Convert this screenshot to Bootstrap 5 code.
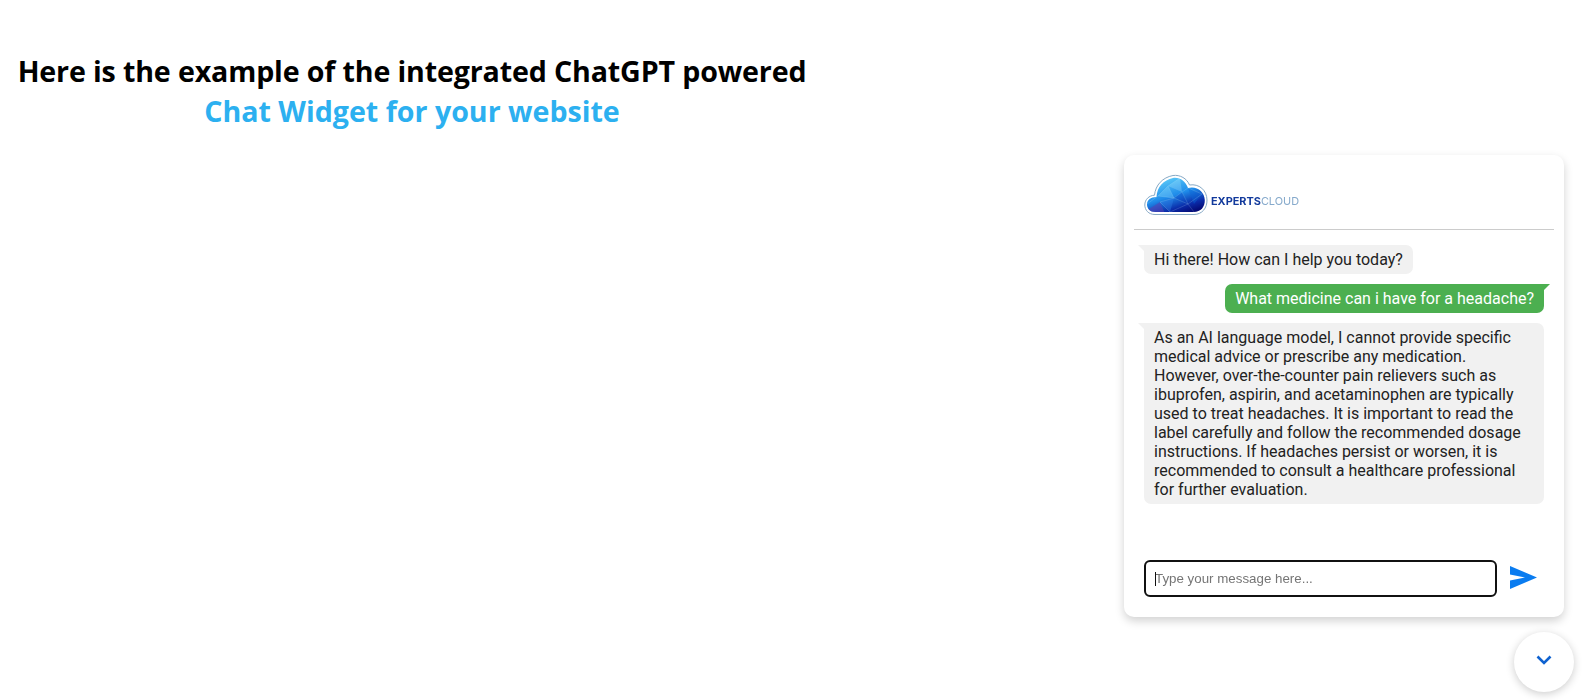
<!DOCTYPE html>
<html lang="en">
<head>
    <meta charset="UTF-8">
    <title>Chat Widget</title>
    <meta name="viewport" content="width=device-width, initial-scale=1">
    <link href="https://cdn.jsdelivr.net/npm/bootstrap@5.3.0/dist/css/bootstrap.min.css" rel="stylesheet">
    <style>
        body {
            background: #fff;
            overflow: hidden;
        }
        #intro {
            width: 824px;
            padding-top: 51px;
            font-family: "Open Sans", sans-serif;
            font-weight: 700;
            font-size: 28.6px;
            letter-spacing: -0.14px;
            line-height: 40px;
            text-align: center;
            color: #000;
        }
        #intro span {
            display: block;
            letter-spacing: 0;
            color: #2cb0f0;
        }
        #chatWidget {
            position: fixed;
            top: 155px;
            left: 1124px;
            width: 440px;
            height: 462px;
            padding: 0 10px;
            border-radius: 10px;
            background: #fff;
            box-shadow: 0 4px 10px rgba(0,0,0,0.18);
            font-family: Roboto, sans-serif;
            font-size: 16px;
            line-height: 19px;
            color: #222;
        }
        #chatHead {
            height: 75px;
            padding: 19px 0 0 10px;
            border-bottom: 1px solid #ccc;
        }
        #brand {
            margin: 20px 0 0 3px;
            font-family: Inter, sans-serif;
            font-size: 10.9px;
            line-height: 14px;
            color: #85a9cb;
        }
        #brand b {
            color: #123a9c;
            font-weight: 700;
        }
        #chatLog {
            padding: 15px 10px 0;
            height: 325px;
        }
        .msg-bubble {
            position: relative;
            padding: 5px 10px;
            border-radius: 7px;
            margin-bottom: 10px;
        }
        .msg-bot {
            align-self: flex-start;
            background: #f1f1f1;
            border-top-left-radius: 0;
        }
        .msg-bot::before {
            content: "";
            position: absolute;
            top: 0;
            left: -6px;
            border-top: 6px solid #f1f1f1;
            border-left: 6px solid transparent;
        }
        .msg-user {
            align-self: flex-end;
            background: #4caf50;
            color: #fff;
            border-top-right-radius: 0;
        }
        .msg-user::after {
            content: "";
            position: absolute;
            top: 0;
            right: -6px;
            border-top: 6px solid #4caf50;
            border-right: 6px solid transparent;
        }
        #chatInput {
            padding-left: 10px;
            padding-top: 5px;
        }
        #inputWrap {
            position: relative;
            line-height: 0;
        }
        #inputCaret {
            position: absolute;
            top: 12px;
            left: 11px;
            width: 1px;
            height: 14px;
            background: #111;
        }
        #messageBox {
            width: 353px;
            height: 37px;
            padding: 0 9px;
            border: 2px solid #111;
            border-radius: 6px;
            font-family: "Liberation Sans", sans-serif;
            font-size: 13.33px;
            outline: none;
        }
        #messageBox::placeholder {
            color: #757575;
        }
        #sendBtn {
            margin-left: 13px;
            margin-top: -3px;
            line-height: 0;
        }
        #toggleBtn {
            position: fixed;
            top: 632px;
            left: 1514px;
            width: 60px;
            height: 60px;
            padding-bottom: 4px;
            border-radius: 50%;
            background: #fff;
            box-shadow: 0 2px 8px rgba(0,0,0,0.2);
        }
    </style>
</head>
<body>

<div id="intro">Here is the example of the integrated ChatGPT powered<span>Chat Widget for your website</span></div>

<!-- Chat Widget -->
<div id="chatWidget">
    <div id="chatHead" class="d-flex align-items-start">
        <svg width="64" height="42" viewBox="0 0 64 42">
            <defs>
                <linearGradient id="cloudFill" x1="0.2" y1="0" x2="0.75" y2="1">
                    <stop offset="0" stop-color="#62d2fa"/>
                    <stop offset="0.5" stop-color="#1f8cea"/>
                    <stop offset="0.82" stop-color="#0a2aa8"/>
                    <stop offset="1" stop-color="#050c78"/>
                </linearGradient>
                <clipPath id="cloudClip">
                    <path d="M11.500 38C6 38 3 34.500 3 30.500c0-4.500 3.500-7.500 9.500-7.500C13 13 19.500 6 29 4c6.500-1 12.500 3 15 10 8.500-2.500 16.500 3.500 16.800 12 .2 7-4 12-11 12Z"/>
                </clipPath>
            </defs>
            <path d="M11 40.500C4.500 40.500.8 36 .8 31c0-5.500 4.200-9.500 9.700-9.800C11.500 11 18.500 3.500 29 1.500c7-1 14 3 16.500 9.500C55 9.500 62.800 16 63 26c.2 8-5 14.500-13 14.500Z" fill="#fff" stroke="#86a9c6" stroke-width="1"/>
            <path d="M11.500 38C6 38 3 34.500 3 30.500c0-4.500 3.500-7.500 9.500-7.500C13 13 19.500 6 29 4c6.500-1 12.500 3 15 10 8.500-2.500 16.500 3.500 16.800 12 .2 7-4 12-11 12Z" fill="url(#cloudFill)"/>
            <g clip-path="url(#cloudClip)">
                <polygon points="0,38 16,28 22,42 0,42" fill="#5a3fb5" fill-opacity="0.55"/>
                <polygon points="14,22 24,12 30,24" fill="#9ae6ff" fill-opacity="0.3"/>
                <polygon points="24,12 36,4 38,18" fill="#bff0ff" fill-opacity="0.25"/>
                <polygon points="30,24 38,18 44,30" fill="#0a3fc0" fill-opacity="0.3"/>
                <polygon points="44,14 58,20 50,30" fill="#0b66d8" fill-opacity="0.4"/>
                <polygon points="16,28 30,24 26,38" fill="#2f7fe6" fill-opacity="0.4"/>
                <path d="M3 30 14 22 24 12 36 4M14 22 30 24 38 18 44 14 58 20M16 28 30 24 44 30 58 20M16 28 26 38 44 30 50 38M24 12 30 24M38 18 44 30" fill="none" stroke="#c8f1ff" stroke-opacity="0.35" stroke-width="0.5"/>
            </g>
        </svg>
        <div id="brand"><b>EXPERTS</b>CLOUD</div>
    </div>

    <div id="chatLog" class="d-flex flex-column">
        <div class="msg-bubble msg-bot">Hi there! How can I help you today?</div>
        <div class="msg-bubble msg-user">What medicine can i have for a headache?</div>
        <div class="msg-bubble msg-bot">As an AI language model, I cannot provide specific medical advice or prescribe any medication. However, over-the-counter pain relievers such as ibuprofen, aspirin, and acetaminophen are typically used to treat headaches. It is important to read the label carefully and follow the recommended dosage instructions. If headaches persist or worsen, it is recommended to consult a healthcare professional for further evaluation.</div>
    </div>

    <div id="chatInput" class="d-flex align-items-center">
        <div id="inputWrap">
            <input type="text" id="messageBox" placeholder="Type your message here...">
            <span id="inputCaret"></span>
        </div>
        <span id="sendBtn">
            <svg width="27" height="23" viewBox="0 0 27 23"><path d="M0 0 27 11.500 0 23V14.500L15 11.500 0 8.500Z" fill="#0a7cf0"/></svg>
        </span>
    </div>
</div>

<div id="toggleBtn" class="d-flex align-items-center justify-content-center">
    <svg width="16" height="10" viewBox="0 0 16 10"><path d="M1.500 1.500 8 8l6.500-6.500" fill="none" stroke="#0f62d0" stroke-width="2.600"/></svg>
</div>

</body>
</html>
